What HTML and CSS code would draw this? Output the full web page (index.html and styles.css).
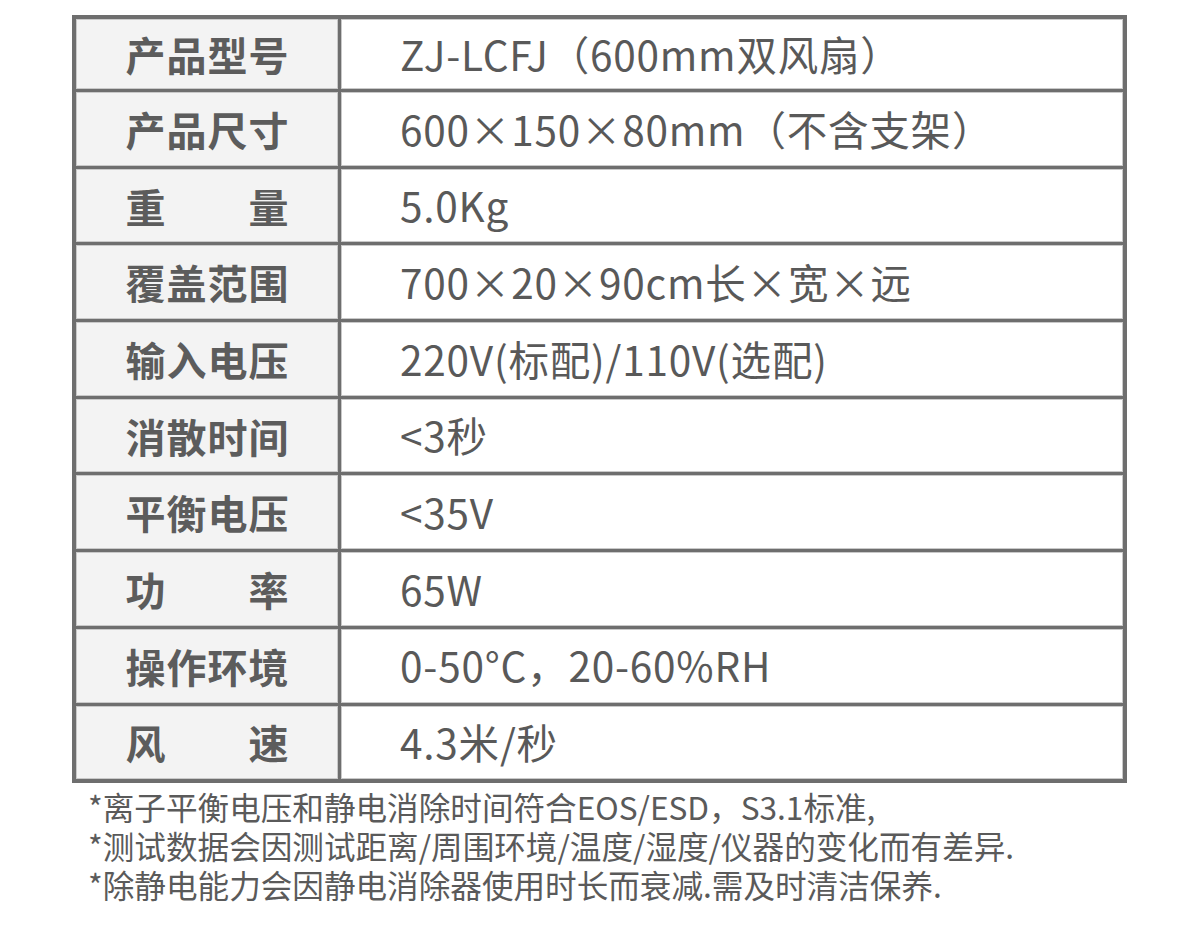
FILE: index.html
```html
<!DOCTYPE html>
<html lang="zh-CN">
<head>
<meta charset="utf-8">
<title>产品参数</title>
<link rel="stylesheet" href="styles.css">
</head>
<body>
<table class="spec">
  <colgroup><col class="col-label"><col class="col-value"></colgroup>
  <tbody>
    <tr><th>产品型号</th><td>ZJ-LCFJ（600mm双风扇）</td></tr>
    <tr><th>产品尺寸</th><td>600×150×80mm（不含支架）</td></tr>
    <tr><th>重　　量</th><td>5.0Kg</td></tr>
    <tr><th>覆盖范围</th><td>700×20×90cm长×宽×远</td></tr>
    <tr><th>输入电压</th><td>220V(标配)/110V(选配)</td></tr>
    <tr><th>消散时间</th><td>&lt;3秒</td></tr>
    <tr><th>平衡电压</th><td>&lt;35V</td></tr>
    <tr><th>功　　率</th><td>65W</td></tr>
    <tr><th>操作环境</th><td>0-50°C，20-60%RH</td></tr>
    <tr><th>风　　速</th><td>4.3米/秒</td></tr>
  </tbody>
</table>
<div class="notes">
  <p>*离子平衡电压和静电消除时间符合EOS/ESD，S3.1标准,</p>
  <p>*测试数据会因测试距离/周围环境/温度/湿度/仪器的变化而有差异.</p>
  <p>*除静电能力会因静电消除器使用时长而衰减.需及时清洁保养.</p>
</div>
</body>
</html>
```

FILE: styles.css
```css
html, body {
  margin: 0;
  padding: 0;
  background: #ffffff;
}

body {
  font-family: "Noto Sans CJK SC", "Noto Sans", sans-serif;
  color: #5a5a5a;
}

.spec {
  margin: 15px 0 0 72px;
  width: 1055px;
  table-layout: fixed;
  border-collapse: separate;
  border-spacing: 3px;
  border: 1px solid #6e6e6e;
  background: #6e6e6e;
}

.col-label { width: 262px; }
.col-value { width: 782px; }

.spec th,
.spec td {
  padding: 0;
  height: 73.7px;
  vertical-align: middle;
  box-shadow: inset 0 0 0 1px #c9c9c9;
}

.spec tr:first-child th,
.spec tr:first-child td {
  height: 70px;
}

.spec th {
  background: #f3f3f3;
  font-size: 40px;
  font-weight: 700;
  letter-spacing: 1px;
  padding-left: 1px;
  text-align: center;
  color: #5c5c5c;
  line-height: 1;
}

.spec td {
  background: #ffffff;
  font-size: 40.5px;
  font-weight: 400;
  letter-spacing: 0.8px;
  padding-left: 59px;
  text-align: left;
  color: #595959;
  line-height: 1;
  white-space: nowrap;
}

.notes {
  margin: 4px 0 0 88px;
  font-size: 31.6px;
  letter-spacing: 0;
  line-height: 39px;
  color: #5a5a5a;
}

.notes p {
  margin: 0;
  white-space: nowrap;
}
```
